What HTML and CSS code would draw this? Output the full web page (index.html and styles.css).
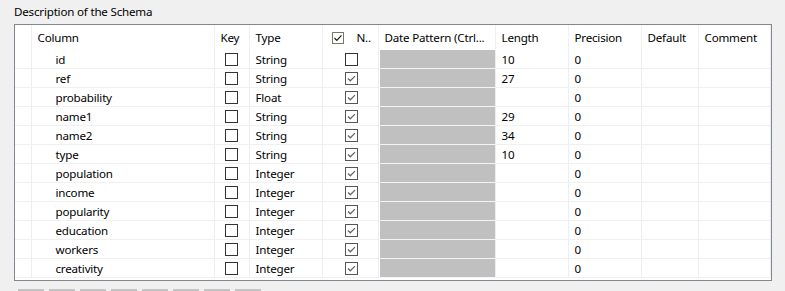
FILE: index.html
```html
<!DOCTYPE html>
<html>
<head>
<meta charset="utf-8">
<link rel="stylesheet" href="styles.css">
</head>
<body>
<div class="title">Description of the Schema</div>
<div class="frame">
<table class="grid">
<colgroup>
<col class="c-gut"><col class="c-col"><col class="c-key"><col class="c-type"><col class="c-n"><col class="c-date"><col class="c-len"><col class="c-prec"><col class="c-def"><col class="c-com">
</colgroup>
<thead>
<tr>
<th class="gut"></th>
<th>Column</th>
<th>Key</th>
<th>Type</th>
<th class="nh"><span class="hbox"><svg width="12" height="12" viewBox="0 0 12 12"><rect x="0.5" y="0.5" width="11" height="11" fill="#fff" stroke="#77776a"/><path d="M2.5 6 L4.8 8.4 L9.5 3.4" fill="none" stroke="#1a1a1a" stroke-width="1.2"/></svg></span><span class="ntext">N..</span></th>
<th>Date Pattern (Ctrl...</th>
<th>Length</th>
<th>Precision</th>
<th>Default</th>
<th>Comment</th>
</tr>
</thead>
<tbody>
<tr><td class="gut"></td><td class="name">id</td><td class="ck"><span class="box"></span></td><td>String</td><td class="nk"><span class="box"></span></td><td class="date"></td><td>10</td><td>0</td><td></td><td></td></tr>
<tr><td class="gut"></td><td class="name">ref</td><td class="ck"><span class="box"></span></td><td>String</td><td class="nk"><span class="box on"></span></td><td class="date"></td><td>27</td><td>0</td><td></td><td></td></tr>
<tr><td class="gut"></td><td class="name">probability</td><td class="ck"><span class="box"></span></td><td>Float</td><td class="nk"><span class="box on"></span></td><td class="date"></td><td></td><td>0</td><td></td><td></td></tr>
<tr><td class="gut"></td><td class="name">name1</td><td class="ck"><span class="box"></span></td><td>String</td><td class="nk"><span class="box on"></span></td><td class="date"></td><td>29</td><td>0</td><td></td><td></td></tr>
<tr><td class="gut"></td><td class="name">name2</td><td class="ck"><span class="box"></span></td><td>String</td><td class="nk"><span class="box on"></span></td><td class="date"></td><td>34</td><td>0</td><td></td><td></td></tr>
<tr><td class="gut"></td><td class="name">type</td><td class="ck"><span class="box"></span></td><td>String</td><td class="nk"><span class="box on"></span></td><td class="date"></td><td>10</td><td>0</td><td></td><td></td></tr>
<tr><td class="gut"></td><td class="name">population</td><td class="ck"><span class="box"></span></td><td>Integer</td><td class="nk"><span class="box on"></span></td><td class="date"></td><td></td><td>0</td><td></td><td></td></tr>
<tr><td class="gut"></td><td class="name">income</td><td class="ck"><span class="box"></span></td><td>Integer</td><td class="nk"><span class="box on"></span></td><td class="date"></td><td></td><td>0</td><td></td><td></td></tr>
<tr><td class="gut"></td><td class="name">popularity</td><td class="ck"><span class="box"></span></td><td>Integer</td><td class="nk"><span class="box on"></span></td><td class="date"></td><td></td><td>0</td><td></td><td></td></tr>
<tr><td class="gut"></td><td class="name">education</td><td class="ck"><span class="box"></span></td><td>Integer</td><td class="nk"><span class="box on"></span></td><td class="date"></td><td></td><td>0</td><td></td><td></td></tr>
<tr><td class="gut"></td><td class="name">workers</td><td class="ck"><span class="box"></span></td><td>Integer</td><td class="nk"><span class="box on"></span></td><td class="date"></td><td></td><td>0</td><td></td><td></td></tr>
<tr><td class="gut"></td><td class="name">creativity</td><td class="ck"><span class="box"></span></td><td>Integer</td><td class="nk"><span class="box on"></span></td><td class="date"></td><td></td><td>0</td><td></td><td></td></tr>
</tbody>
</table>
</div>
<div class="tabs">
<span class="tab"></span><span class="tab"></span><span class="tab"></span><span class="tab"></span><span class="tab"></span><span class="tab"></span><span class="tab"></span><span class="tab"></span>
</div>
</body>
</html>
```
FILE: styles.css
```css
html, body {
  margin: 0;
  padding: 0;
}
body {
  background: #f0f0f0;
  font-family: "Noto Sans", "Open Sans", sans-serif;
  font-size: 11.6px;
  letter-spacing: -0.2px;
  color: #000;
  width: 785px;
  height: 291px;
  overflow: hidden;
}
.title {
  padding: 4px 0 0 14px;
  line-height: 16px;
  height: 16px;
}
.frame {
  margin: 4px 0 0 14px;
  width: 756px;
  height: 255px;
  border: 1px solid #828790;
  background: #fff;
  overflow: hidden;
}
.grid {
  border-collapse: collapse;
  table-layout: fixed;
  width: 755px;
}
.c-gut { width: 16px; }
.c-col { width: 183px; }
.c-key { width: 35px; }
.c-type { width: 73px; }
.c-n { width: 56px; }
.c-date { width: 117px; }
.c-len { width: 73px; }
.c-prec { width: 73px; }
.c-def { width: 57px; }
.c-com { width: 72px; }
.grid th {
  height: 24px;
  padding: 1px 0 0 6px;
  font-weight: normal;
  text-align: left;
  white-space: nowrap;
  overflow: hidden;
  border-right: 1px solid #f0f0f0;
  line-height: 24px;
}
.grid th.gut {
  border-right: 1px solid #eaeef5;
}
.grid td {
  height: 16px;
  padding: 2px 0 0 6px;
  line-height: 16px;
  white-space: nowrap;
  overflow: hidden;
  border-right: 1px solid #eaeef5;
  border-bottom: 1px solid #f0f0f0;
  vertical-align: top;
}
.grid td.gut { padding: 0; height: 18px; }
.grid td.name { padding-left: 24px; }
.grid td.ck { padding: 3px 0 0 0; height: 15px; }
.grid td.ck .box { margin: 0 auto; }
.grid td.nk { padding: 3px 0 0 22px; height: 15px; }
.grid td.date {
  padding: 0;
  height: 18px;
  background: #c0c0c0;
  border-bottom: 1px solid #f4f4f4;
  box-shadow: inset 1px 0 0 #fff;
}
.box {
  display: block;
  width: 11px;
  height: 11px;
  border: 1px solid #333;
  background: #fff;
}
.box.on {
  border-color: #555;
  background: #fff url("data:image/svg+xml,%3Csvg xmlns='http://www.w3.org/2000/svg' width='11' height='11' viewBox='0 0 11 11'%3E%3Cpath d='M2 5.5 L4.3 7.8 L9 3.1' fill='none' stroke='%23666' stroke-width='1.3'/%3E%3C/svg%3E") no-repeat 0 0;
}
.grid th.nh {
  padding-left: 9px;
}
.hbox {
  display: inline-block;
  width: 12px;
  height: 12px;
  vertical-align: -2px;
}
.hbox svg { display: block; }
.ntext {
  margin-left: 13px;
}
.tabs {
  display: flex;
  gap: 5px;
  margin: 8px 0 0 18px;
}
.tab {
  width: 26px;
  height: 2px;
  background: #c4c4c4;
}
```
